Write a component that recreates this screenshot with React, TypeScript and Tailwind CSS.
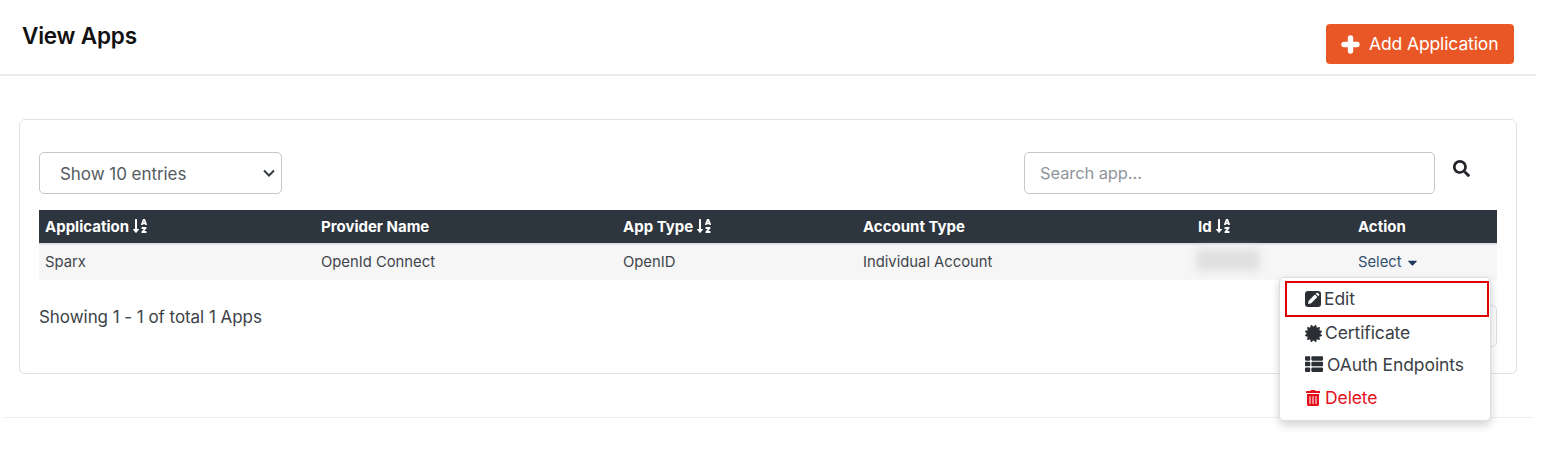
import React from "react";
import { FaSearch, FaSortAlphaDown, FaCaretDown, FaCertificate, FaThList, FaTrashAlt } from "react-icons/fa";

const font = { fontFamily: '"Inter", "Noto Sans", sans-serif' };

function Sort() {
  return <FaSortAlphaDown className="ml-[3px] inline-block text-[16px] align-[-2px]" />;
}

export default function App() {
  return (
    <div className="relative h-[456px] w-[1548px] overflow-hidden bg-white text-[#212529]" style={font}>
      <div className="flex h-[76px] w-[1536px] items-start justify-between border-b-2 border-[#e9ecef] pl-[22px] pr-[22px]">
        <h1 className="mt-[22px] text-[22.5px] font-semibold leading-[28px] tracking-[-0.2px] text-[#111]">View Apps</h1>
        <button className="mt-[24px] flex h-[40px] w-[188px] items-center rounded-[4px] bg-[#ea5726] pl-[15px] text-[17.5px] tracking-[-0.12px] text-white">
          <svg width="19" height="19" viewBox="0 0 19 19" className="mr-[9px]" fill="none" stroke="#fff" strokeWidth="5.4" strokeLinecap="round">
            <path d="M9.5 3v13M3 9.5h13" />
          </svg>
          Add Application
        </button>
      </div>

      <div className="ml-[19px] mt-[43px] h-[255px] w-[1498px] rounded-[6px] border border-[#dee2e6] px-[19px] pt-[32px]">
        <div className="flex items-start justify-between">
          <div className="flex h-[42px] w-[243px] items-center justify-between rounded-[5px] border border-[#c4c7ca] pl-[20px] pr-[6px] text-[17px] leading-[24px] tracking-[-0.05px] text-[#555b61]">
            <span className="pt-[2px]">Show 10 entries</span>
            <svg width="12" height="8" viewBox="0 0 12 8" fill="none" stroke="#343a40" strokeWidth="2"><path d="M1 1.5l5 5 5-5" /></svg>
          </div>
          <div className="flex items-start">
            <div className="flex h-[42px] w-[411px] items-center rounded-[5px] border border-[#c4c7ca] pl-[15px] text-[16.5px] tracking-[-0.1px] text-[#8f959a]">Search app...</div>
            <FaSearch className="ml-[18px] mr-[27px] mt-[8px] text-[17px] text-[#212529]" />
          </div>
        </div>

        <table className="mt-[16px] w-[1458px] table-fixed border-collapse text-left text-[14.8px]">
          <colgroup>
            <col className="w-[276px]" />
            <col className="w-[302px]" />
            <col className="w-[240px]" />
            <col className="w-[335px]" />
            <col className="w-[160px]" />
            <col />
          </colgroup>
          <thead>
            <tr className="h-[34px] bg-[#2d353e] text-[15px] text-white">
              <th className="px-[6px] pt-[2px] font-bold">Application<Sort /></th>
              <th className="px-[6px] pt-[2px] font-bold">Provider Name</th>
              <th className="px-[6px] pt-[2px] font-bold">App Type<Sort /></th>
              <th className="px-[6px] pt-[2px] font-bold">Account Type</th>
              <th className="pl-[6px] pt-[2px] font-bold">Id<Sort /></th>
              <th className="px-[6px] pt-[2px] font-bold">Action</th>
            </tr>
          </thead>
          <tbody>
            <tr className="h-[36px] border-t-2 border-[#dee2e6] bg-[#f6f6f6] align-top text-[#3f454b]">
              <td className="px-[6px] pt-[6px]">Sparx</td>
              <td className="px-[6px] pt-[6px]">OpenId Connect</td>
              <td className="px-[6px] pt-[6px]">OpenID</td>
              <td className="px-[6px] pt-[6px]">Individual Account</td>
              <td className="pl-[4px] pt-[4px]"><div className="h-[22px] w-[64px] rounded-[4px] bg-[#e0e0e0] blur-[4px]" /></td>
              <td className="px-[6px] pt-[6px] text-[#34506f]">
                <span className="inline-flex items-center">Select<FaCaretDown className="ml-[3px] text-[15px] text-[#1f3a5f]" /></span>
              </td>
            </tr>
          </tbody>
        </table>

        <div className="mt-[25px] flex items-start justify-between">
          <p className="text-[17px] tracking-[-0.05px] text-[#3c4248]">Showing 1 - 1 of total 1 Apps</p>
          <div className="h-[42px] w-[40px] rounded-[5px] border border-[#dee2e6]" />
        </div>
      </div>

      <div className="ml-[3px] mt-[43px] h-px w-[1531px] bg-[#eef0f2]" />

      <div className="absolute left-[1279px] top-[277px] flex h-[144px] w-[212px] flex-col rounded-[5px] border border-[#dcdfe2] bg-white pt-[3px] text-[17.5px] tracking-[-0.1px] text-[#3a4046] shadow-[0_4px_10px_rgba(0,0,0,0.18)]">
        <div className="ml-[5px] flex h-[36px] w-[204px] items-center border-[2px] border-[#e00000] pl-[18px]">
          <svg width="16" height="16" viewBox="0 0 16 16" className="mr-[3px]">
            <rect width="16" height="16" rx="3" fill="#2b2f33" />
            <path d="M3 13l.7-3.2 6.2-6.2 2.5 2.5-6.2 6.2zM10.7 2.8l.8-.8a1 1 0 0 1 1.4 0l1.1 1.1a1 1 0 0 1 0 1.4l-.8.8z" fill="#fff" />
          </svg>
          Edit
        </div>
        <div className="flex h-[32px] items-center pl-[25px]">
          <FaCertificate className="mr-[3px] text-[17px] text-[#2b2f33]" />Certificate
        </div>
        <div className="flex h-[33px] items-center pl-[25px]">
          <FaThList className="mr-[4px] -mt-[3px] text-[18px] text-[#2b2f33]" />OAuth Endpoints
        </div>
        <div className="flex h-[32px] items-center pl-[25px] text-[#e3101c]">
          <FaTrashAlt className="mr-[4px] text-[16px]" />Delete
        </div>
      </div>
    </div>
  );
}
